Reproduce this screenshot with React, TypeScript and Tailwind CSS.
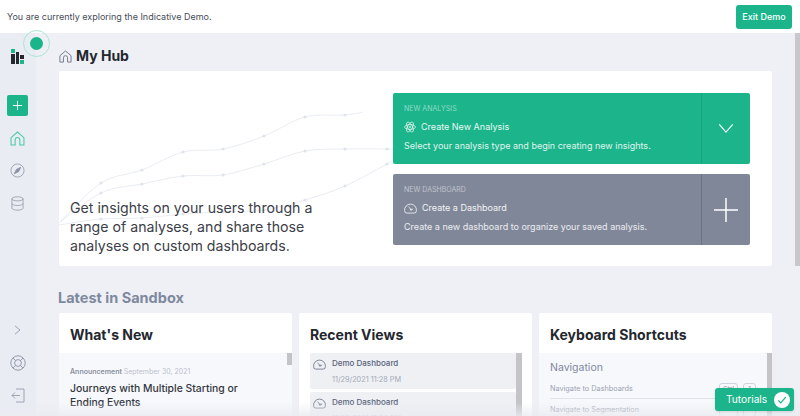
import type { ReactNode } from "react";

function HomeIcon({ className }: { className: string }) {
  return (
    <svg viewBox="0 0 14 14" fill="none" stroke="currentColor" strokeWidth="1" className={className}>
      <path d="M1 6.200 7 1l6 5.200V13H9.200V8.300a2.200 2.200 0 0 0-4.400 0V13H1z" />
    </svg>
  );
}

function GaugeIcon({ className }: { className: string }) {
  return (
    <svg viewBox="0 0 14 12" fill="none" stroke="currentColor" strokeWidth="0.9" className={className}>
      <path d="M3 11h8a2.400 2.400 0 0 0 2.400-2.600A6.400 6.400 0 0 0 7 1.200 6.400 6.400 0 0 0 .6 8.400 2.400 2.400 0 0 0 3 11z" />
      <path d="M4.800 4.200l2.600 2.600M9.600 6.200l-.7 1.200" />
      <circle cx="7.600" cy="7.200" r=".8" />
    </svg>
  );
}

function AtomIcon({ className }: { className: string }) {
  return (
    <svg viewBox="0 0 14 14" fill="none" stroke="currentColor" strokeWidth="0.8" className={className}>
      <ellipse cx="7" cy="7" rx="6.400" ry="2.800" />
      <ellipse cx="7" cy="7" rx="6.400" ry="2.800" transform="rotate(60 7 7)" />
      <ellipse cx="7" cy="7" rx="6.400" ry="2.800" transform="rotate(120 7 7)" />
      <circle cx="7" cy="7" r="1" />
    </svg>
  );
}

const series: [number, number][][] = [
  [[59, 223], [101, 183], [142, 170], [183, 152], [223, 149], [264, 136], [305, 117], [345, 115], [363, 112]],
  [[59, 223], [101, 193], [142, 184], [183, 176], [223, 175], [264, 164], [305, 151], [345, 149], [387, 149], [394, 149]],
  [[59, 225], [101, 219], [142, 218], [183, 214], [223, 212], [264, 210], [305, 200], [345, 186], [387, 164], [394, 160]],
];

function smooth(p: [number, number][]) {
  let d = `M${p[0][0]} ${p[0][1]}`;
  for (let i = 0; i < p.length - 1; i++) {
    const a = p[Math.max(i - 1, 0)];
    const b = p[i];
    const c = p[i + 1];
    const e = p[Math.min(i + 2, p.length - 1)];
    const c1x = b[0] + (c[0] - a[0]) / 6;
    const c1y = b[1] + (c[1] - a[1]) / 6;
    const c2x = c[0] - (e[0] - b[0]) / 6;
    const c2y = c[1] - (e[1] - b[1]) / 6;
    d += `C${c1x} ${c1y} ${c2x} ${c2y} ${c[0]} ${c[1]}`;
  }
  return d;
}

function Chart() {
  return (
    <svg viewBox="59 71 336 195" className="absolute left-0 top-0 h-[195px] w-[336px]" fill="none">
      {series.map((points, s) => (
        <g key={s}>
          <path d={smooth(points)} stroke="#e9ecf2" strokeWidth="1" />
          {points.slice(1, -1).map(([x, y]) => (
            <circle key={x} cx={x} cy={y} r="1.600" fill="#e0e4ec" />
          ))}
        </g>
      ))}
    </svg>
  );
}

function ActionCard({
  color,
  divider,
  label,
  title,
  desc,
  icon,
  action,
}: {
  color: string;
  divider: string;
  label: string;
  title: string;
  desc: string;
  icon: ReactNode;
  action: ReactNode;
}) {
  return (
    <div className={`flex h-[71px] rounded-[2px] text-white ${color}`}>
      <div className="min-w-0 flex-1 pl-[11px] pt-[11px]">
        <div className="text-[7px] leading-[10px] text-white/50">{label}</div>
        <div className="mt-[4px] flex h-[18px] items-center gap-[5px] text-[9px] text-white/90">
          {icon}
          <span>{title}</span>
        </div>
        <div className="mt-[1px] whitespace-nowrap text-[9px] leading-[18px] text-white/85">{desc}</div>
      </div>
      <div className={`flex w-[49px] flex-none items-center justify-center border-l ${divider}`}>{action}</div>
    </div>
  );
}

function CardHead({ title }: { title: string }) {
  return <div className="h-[40px] pl-[11px] pt-[10px] text-[14px] font-bold leading-[24px] text-[#24272e]">{title}</div>;
}

function RecentRow({ date }: { date: string }) {
  return (
    <div className="mb-[3px] flex h-[36px] flex-none rounded-[2px] bg-[#eef0f4] pl-[3px] pt-[5px]">
      <GaugeIcon className="mt-[1px] h-[11px] w-[13px] flex-none text-[#6b7486]" />
      <div className="ml-[6px]">
        <div className="text-[8px] font-medium leading-[11px] text-[#58627a]">Demo Dashboard</div>
        <div className="mt-[5px] text-[7.300px] leading-[11px] text-[#a4aab8]">{date}</div>
      </div>
    </div>
  );
}

function Shortcut({ label, keys, border }: { label: string; keys: string[]; border?: boolean }) {
  return (
    <div className={`flex h-[20px] flex-none items-center justify-between pt-[2px] ${border ? "border-b border-[#e0e3ea]" : ""}`}>
      <span className="text-[7.300px] text-[#9aa1b1]">{label}</span>
      <div className="flex gap-[5px]">
        {keys.map((k) => (
          <span key={k} className="flex h-[13px] min-w-[13px] items-center justify-center rounded-[3px] border border-[#cfd3dc] px-[3px] text-[6.500px] text-[#8f96a6]">
            {k}
          </span>
        ))}
      </div>
    </div>
  );
}

export default function App() {
  return (
    <div className="flex h-[416px] w-[800px] flex-col overflow-hidden bg-[#eef0f5] font-['Inter',sans-serif]">
      <div className="flex h-[33px] flex-none items-center justify-between bg-white pl-[7px] pr-[8px]">
        <span className="text-[9px] text-[#474c57]">You are currently exploring the Indicative Demo.</span>
        <button className="flex h-[24px] w-[56px] items-center justify-center rounded-[3px] bg-[#1bb48b] text-[9px] font-medium text-white">Exit Demo</button>
      </div>

      <div className="relative flex min-h-0 flex-1">
        <aside className="relative flex w-[36px] flex-none flex-col items-center bg-[#e9ecf3] pr-[1px]">
          <svg viewBox="0 0 13 15" className="mt-[16px] h-[15px] w-[13px]">
            <rect x="0" y="0" width="4" height="4" fill="#1bb48b" />
            <rect x="0" y="5" width="4" height="10" fill="#24272e" />
            <rect x="5" y="3" width="3" height="12" fill="#24272e" />
            <rect x="9" y="6" width="4" height="4" fill="#24272e" />
            <rect x="9" y="11" width="4" height="4" fill="#1bb48b" />
          </svg>
          <div className="mt-[31px] flex h-[21px] w-[21px] items-center justify-center rounded-[2px] bg-[#1bb48b]">
            <svg viewBox="0 0 12 12" className="h-[11px] w-[11px]" stroke="white" strokeWidth="1">
              <path d="M6 1v10M1 6h10" />
            </svg>
          </div>
          <HomeIcon className="mt-[15px] h-[15px] w-[15px] text-[#4cc9a8]" />
          <svg viewBox="0 0 16 16" fill="none" stroke="#8b92a3" strokeWidth="0.8" className="mt-[17px] h-[15px] w-[15px]">
            <circle cx="8" cy="8" r="7" />
            <path d="M11.500 4.500 9.200 9.200 4.500 11.500 6.800 6.800z" fill="#8b92a3" />
          </svg>
          <svg viewBox="0 0 14 16" fill="none" stroke="#8b92a3" strokeWidth="0.8" className="mt-[18px] h-[15px] w-[13px]">
            <ellipse cx="7" cy="3" rx="6" ry="2.200" />
            <path d="M1 3v10c0 1.200 2.700 2.200 6 2.200s6-1 6-2.200V3M1 8c0 1.200 2.700 2.200 6 2.200s6-1 6-2.200" />
          </svg>
          <div className="flex-1" />
          <svg viewBox="0 0 8 12" fill="none" stroke="#8b92a3" strokeWidth="1" className="h-[10px] w-[7px]">
            <path d="M1 1l6 5-6 5" />
          </svg>
          <svg viewBox="0 0 16 16" fill="none" stroke="#8b92a3" strokeWidth="0.9" className="mt-[20px] h-[16px] w-[16px]">
            <circle cx="8" cy="8" r="7.200" />
            <circle cx="8" cy="8" r="3.400" />
            <path d="M3 3l2.600 2.600M13 3l-2.600 2.600M3 13l2.600-2.600M13 13l-2.600-2.600" />
          </svg>
          <svg viewBox="0 0 14 15" fill="none" stroke="#8b92a3" strokeWidth="0.8" className="mb-[13px] mt-[17px] h-[15px] w-[14px]">
            <path d="M5 1h8v13H5M9 7.500H1M4 4.500l-3 3 3 3" />
          </svg>
          <div className="absolute left-[23px] top-[-3px] flex h-[27px] w-[27px] items-center justify-center rounded-full border border-[#a8e6d5]">
            <div className="h-[13px] w-[13px] rounded-full bg-[#1bb48b]" />
          </div>
        </aside>

        <main className="flex min-w-0 flex-1 flex-col pl-[23px] pr-[28px]">
          <div className="flex h-[38px] flex-none items-center gap-[4px] pt-[8px]">
            <HomeIcon className="h-[13px] w-[13px] text-[#6f7687]" />
            <h1 className="text-[14px] font-bold leading-[20px] text-[#24272e]">My Hub</h1>
          </div>

          <section className="relative flex h-[195px] flex-none overflow-hidden rounded-[2px] bg-white">
            <Chart />
            <div className="relative flex w-[334px] flex-none flex-col justify-end pb-[11px] pl-[11px] text-[14.150px] leading-[19px] text-[#3c4048]">
              <p className="w-[250px]">Get insights on your users through a range of analyses, and share those analyses on custom dashboards.</p>
            </div>
            <div className="relative flex min-w-0 flex-1 flex-col gap-[10px] pr-[22px] pt-[22px]">
              <ActionCard
                color="bg-[#1bb48b]"
                divider="border-[#18a27e]"
                label="NEW ANALYSIS"
                title="Create New Analysis"
                desc="Select your analysis type and begin creating new insights."
                icon={<AtomIcon className="h-[12px] w-[12px]" />}
                action={
                  <svg viewBox="0 0 16 10" fill="none" stroke="white" strokeWidth="1.200" className="h-[9px] w-[16px]">
                    <path d="M.5.500 8 9 15.500.500" />
                  </svg>
                }
              />
              <ActionCard
                color="bg-[#808799]"
                divider="border-[#6c7385]"
                label="NEW DASHBOARD"
                title="Create a Dashboard"
                desc="Create a new dashboard to organize your saved analysis."
                icon={<GaugeIcon className="h-[11px] w-[13px]" />}
                action={
                  <svg viewBox="0 0 24 24" stroke="white" strokeWidth="1.500" className="h-[24px] w-[24px]">
                    <path d="M12 0v24M0 12h24" />
                  </svg>
                }
              />
            </div>
          </section>

          <h2 className="-ml-[1px] mt-[20px] h-[27px] flex-none text-[14.500px] font-bold leading-[24px] text-[#7f899e]">Latest in Sandbox</h2>

          <div className="grid flex-none grid-cols-3 gap-[7px]">
            <div className="h-[103px] overflow-hidden rounded-t-[2px] bg-white">
              <CardHead title="What's New" />
              <div className="flex h-[63px] bg-[#f7f8fc] pl-[11px]">
                <div className="min-w-0 flex-1 pt-[13px]">
                  <div className="whitespace-nowrap text-[7px] leading-[12px]">
                    <span className="font-semibold text-[#8a90a0]">Announcement </span>
                    <span className="text-[#bcc1cc]">September 30, 2021</span>
                  </div>
                  <div className="mt-[4px] w-[190px] text-[10.400px] font-medium leading-[14px] text-[#33373f]">
                    Journeys with Multiple Starting or Ending Events
                  </div>
                </div>
                <div className="h-[12px] w-[5px] flex-none bg-[#c4c4c8]" />
              </div>
            </div>

            <div className="h-[103px] overflow-hidden rounded-t-[2px] bg-white">
              <CardHead title="Recent Views" />
              <div className="flex h-[63px] pl-[11px] pr-[10px]">
                <div className="flex min-w-0 flex-1 flex-col overflow-hidden">
                  <RecentRow date="11/29/2021 11:28 PM" />
                  <RecentRow date="11/29/2021 11:24 PM" />
                </div>
                <div className="w-[6px] flex-none bg-[#c4c4c8]" />
              </div>
            </div>

            <div className="h-[103px] overflow-hidden rounded-t-[2px] bg-white">
              <CardHead title="Keyboard Shortcuts" />
              <div className="flex h-[63px] bg-[#f7f8fc] pl-[11px]">
                <div className="flex min-w-0 flex-1 flex-col overflow-hidden pr-[11px]">
                  <div className="mt-[6px] h-[20px] flex-none text-[10.500px] leading-[18px] text-[#7f899e]">Navigation</div>
                  <Shortcut label="Navigate to Dashboards" keys={["Ctrl", "1"]} border />
                  <Shortcut label="Navigate to Segmentation" keys={["Ctrl", "2"]} />
                </div>
                <div className="w-[5px] flex-none bg-[#c4c4c8]" />
              </div>
            </div>
          </div>
        </main>

        <div className="absolute right-0 top-0 h-[233px] w-[5px] bg-[#c8c8cc]" />
        <div className="pointer-events-none absolute bottom-0 left-0 h-[14px] w-full bg-gradient-to-t from-[#e9ebf0]/80 to-transparent" />
        <div className="absolute bottom-[5px] right-[6px] flex h-[23px] w-[79px] items-center justify-between rounded-[3px] bg-[#1bb48b] pl-[11px] pr-[4px] text-[10.200px] text-white shadow">
          <span>Tutorials</span>
          <span className="flex h-[16px] w-[16px] items-center justify-center rounded-full bg-white">
            <svg viewBox="0 0 12 12" fill="none" stroke="#1bb48b" strokeWidth="1.500" className="h-[10px] w-[10px]">
              <path d="M1.500 6.500 4.500 9.500 10.500 2.500" />
            </svg>
          </span>
        </div>
      </div>
    </div>
  );
}
